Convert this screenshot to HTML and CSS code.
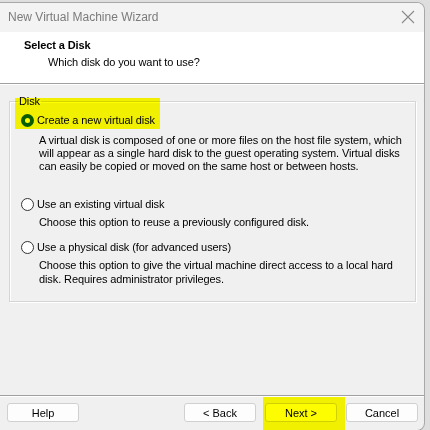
FILE: index.html
```html
<!DOCTYPE html>
<html lang="en">
<head>
  <meta charset="UTF-8">
  <title>New Virtual Machine Wizard</title>
  <link rel="stylesheet" href="styles.css">
</head>
<body>
  <div class="window">
    <div class="titlebar">
      <span class="title">New Virtual Machine Wizard</span>
      <svg class="close" width="14" height="14" viewBox="0 0 14 14">
        <path d="M1 1 L13 13 M13 1 L1 13" stroke="#8a8a8a" stroke-width="1.1" fill="none"/>
      </svg>
    </div>

    <div class="header">
      <div class="head-title">Select a Disk</div>
      <div class="head-sub">Which disk do you want to use?</div>
    </div>

    <div class="content">
      <fieldset class="group">
        <legend>Disk</legend>

        <div class="option first">
          <span class="radio checked"></span>
          <span>Create a new virtual disk</span>
        </div>
        <p class="desc d1">A virtual disk is composed of one or more files on the host file system, which
          will appear as a single hard disk to the guest operating system. Virtual disks
          can easily be copied or moved on the same host or between hosts.</p>

        <div class="option second">
          <span class="radio"></span>
          <span>Use an existing virtual disk</span>
        </div>
        <p class="desc d2">Choose this option to reuse a previously configured disk.</p>

        <div class="option third">
          <span class="radio"></span>
          <span>Use a physical disk (for advanced users)</span>
        </div>
        <p class="desc d3">Choose this option to give the virtual machine direct access to a local hard
          disk. Requires administrator privileges.</p>

        <div class="mark mark-disk"></div>
      </fieldset>
    </div>

    <div class="buttons">
      <button class="btn">Help</button>
      <div class="spacer"></div>
      <button class="btn">&lt; Back</button>
      <button class="btn">Next &gt;</button>
      <button class="btn">Cancel</button>
      <div class="mark mark-next"></div>
    </div>
  </div>
</body>
</html>
```

FILE: styles.css
```css
body {
  margin: 0;
  background: #dedede;
  font-family: "Liberation Sans", Arial, sans-serif;
  font-size: 11px;
  letter-spacing: -0.1px;
  color: #000;
}
.window {
  position: relative;
  width: 424px;
  height: 427px;
  margin-top: 2px;
  display: flex;
  flex-direction: column;
  background: #f0f0f0;
  border: 1px solid #a8a8a8;
  border-left: none;
  border-radius: 0 8px 8px 0;
  overflow: hidden;
}
.titlebar {
  height: 28px;
  flex: none;
  display: flex;
  align-items: center;
  justify-content: space-between;
  padding: 0 9px 1px 8px;
  background: #f3f3f3;
}
.title {
  font-size: 12px;
  letter-spacing: 0;
  color: #7b7b7b;
}
.header {
  height: 52px;
  flex: none;
  background: #fff;
  border-bottom: 1px solid #a0a0a0;
  box-shadow: 0 1px 0 #fff;
  padding: 6px 0 0 24px;
  box-sizing: border-box;
}
.head-title {
  font-weight: bold;
  line-height: 14px;
}
.head-sub {
  margin: 3px 0 0 24px;
  line-height: 14px;
}
.content {
  flex: 1;
  padding: 11px 8px 0 9px;
  border-bottom: 1px solid #a0a0a0;
}
.group {
  position: relative;
  margin: 0;
  height: 207px;
  box-sizing: border-box;
  padding: 0 0 0 11px;
  border: 1px solid #d5d5d5;
  box-shadow: inset 1px 1px 0 #fff, 1px 1px 0 #fff;
}
.group legend {
  padding: 0 1px;
  margin-left: -3px;
  line-height: 13px;
}
.option {
  display: flex;
  align-items: center;
  gap: 3px;
  height: 16px;
}
.option.first {
  margin-top: 4px;
}
.option.second {
  margin-top: 23px;
}
.option.third {
  margin-top: 10px;
}
.radio {
  flex: none;
  width: 13px;
  height: 13px;
  border-radius: 50%;
  border: 1px solid #333;
  background: #fff;
  box-sizing: border-box;
}
.radio.checked {
  border: 4px solid #0a5c9c;
  background: #fff;
}
.desc {
  margin: 0 0 0 18px;
  line-height: 13px;
}
.desc.d1 {
  margin-top: 6px;
}
.desc.d2 {
  margin-top: 4px;
}
.desc.d3 {
  margin-top: 3px;
  line-height: 14px;
}
.buttons {
  position: relative;
  height: 34px;
  flex: none;
  display: flex;
  align-items: center;
  gap: 9px;
  padding: 0 6px 2px 7px;
  box-sizing: border-box;
  border-top: 1px solid #fff;
}
.spacer {
  flex: 1;
}
.btn {
  width: 72px;
  height: 19px;
  padding: 0;
  background: #fdfdfd;
  border: 1px solid #d0d0d0;
  border-radius: 3px;
  font-family: "Liberation Sans", Arial, sans-serif;
  font-size: 11px;
  color: #000;
}
.mark {
  position: absolute;
  background: #ffff00;
  mix-blend-mode: multiply;
}
.mark-disk {
  left: 5px;
  top: -10px;
  width: 145px;
  height: 31px;
}
.mark-next {
  left: 263px;
  top: 0;
  width: 82px;
  height: 34px;
}
.close {
  display: block;
}
```
